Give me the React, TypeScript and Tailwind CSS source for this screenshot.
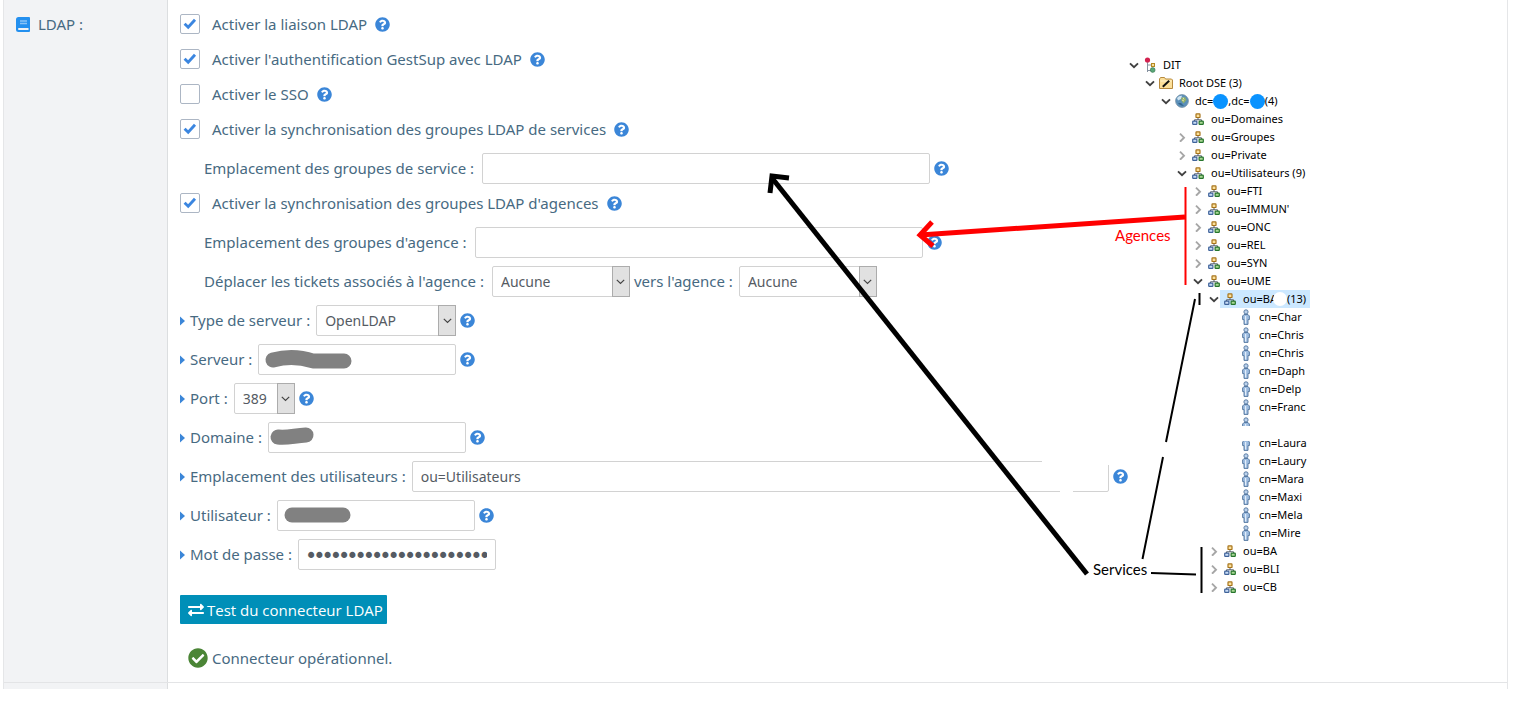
import type { ReactNode } from 'react';
import { FaCheckCircle, FaExchangeAlt, FaQuestionCircle } from 'react-icons/fa';

type TreeKind = 'dit' | 'folder' | 'globe' | 'ou' | 'person' | 'personTop' | 'personBottom';

interface TreeNode {
  level: number;
  kind: TreeKind;
  label: string;
  state?: 'open' | 'closed';
  selected?: boolean;
}

const treeNodes: TreeNode[] = [
  { level: 0, kind: 'dit', label: 'DIT', state: 'open' },
  { level: 1, kind: 'folder', label: 'Root DSE (3)', state: 'open' },
  { level: 2, kind: 'globe', label: '', state: 'open' },
  { level: 3, kind: 'ou', label: 'ou=Domaines' },
  { level: 3, kind: 'ou', label: 'ou=Groupes', state: 'closed' },
  { level: 3, kind: 'ou', label: 'ou=Private', state: 'closed' },
  { level: 3, kind: 'ou', label: 'ou=Utilisateurs (9)', state: 'open' },
  { level: 4, kind: 'ou', label: 'ou=FTI', state: 'closed' },
  { level: 4, kind: 'ou', label: "ou=IMMUN'", state: 'closed' },
  { level: 4, kind: 'ou', label: 'ou=ONC', state: 'closed' },
  { level: 4, kind: 'ou', label: 'ou=REL', state: 'closed' },
  { level: 4, kind: 'ou', label: 'ou=SYN', state: 'closed' },
  { level: 4, kind: 'ou', label: 'ou=UME', state: 'open' },
  { level: 5, kind: 'ou', label: 'ou=BA', state: 'open', selected: true },
  { level: 6, kind: 'person', label: 'cn=Char' },
  { level: 6, kind: 'person', label: 'cn=Chris' },
  { level: 6, kind: 'person', label: 'cn=Chris' },
  { level: 6, kind: 'person', label: 'cn=Daph' },
  { level: 6, kind: 'person', label: 'cn=Delp' },
  { level: 6, kind: 'person', label: 'cn=Franc' },
  { level: 6, kind: 'personTop', label: '' },
  { level: 6, kind: 'personBottom', label: 'cn=Laura' },
  { level: 6, kind: 'person', label: 'cn=Laury' },
  { level: 6, kind: 'person', label: 'cn=Mara' },
  { level: 6, kind: 'person', label: 'cn=Maxi' },
  { level: 6, kind: 'person', label: 'cn=Mela' },
  { level: 6, kind: 'person', label: 'cn=Mire' },
  { level: 5, kind: 'ou', label: 'ou=BA', state: 'closed' },
  { level: 5, kind: 'ou', label: 'ou=BLI', state: 'closed' },
  { level: 5, kind: 'ou', label: 'ou=CB', state: 'closed' },
];

function Help() {
  return (
    <button type="button" aria-label="Aide" className="shrink-0 text-[#3b86d8]">
      <FaQuestionCircle size={15} />
    </button>
  );
}

function CheckRow({ id, label, checked = false }: { id: string; label: string; checked?: boolean }) {
  return (
    <div className="mt-1 flex h-[31px] items-center">
      <span className="relative flex pb-0.5">
        <input
          id={id}
          type="checkbox"
          defaultChecked={checked}
          className="peer size-5 appearance-none rounded-[2px] border border-[#acb6c4] bg-white"
        />
        <svg
          viewBox="0 0 20 20"
          className="pointer-events-none absolute inset-0 hidden size-5 peer-checked:block"
          fill="none"
          stroke="#3b86e0"
          strokeWidth="2.9"
        >
          <path d="M4.6 9.8 L8.2 13.2 L15 5.8" />
        </svg>
      </span>
      <label htmlFor={id} className="ml-3 mr-2 pb-0.5">{label}</label>
      <Help />
    </div>
  );
}

function FieldRow({ id, label, nested = false, children }: { id: string; label: string; nested?: boolean; children: ReactNode }) {
  return (
    <div className={nested ? 'mt-2 flex h-[31px] items-center pl-6' : 'mt-2 flex h-[31px] items-center'}>
      {!nested && (
        <svg viewBox="0 0 5 10" className="mr-[5px] h-[10px] w-[5px]" fill="#3b86d8">
          <path d="M0 0.5 L5 5 L0 9.5 Z" />
        </svg>
      )}
      <label htmlFor={id} className={nested ? 'mr-2 pb-0.5' : 'mr-1.5 pb-0.5'}>{label}</label>
      {children}
    </div>
  );
}

const inputClass = 'h-[31px] rounded-[2px] border border-[#d2d2d2] bg-white px-2 text-[#555b63] outline-none';

function Select({ id, value, width }: { id: string; value: string; width: string }) {
  return (
    <span className={`relative flex h-[31px] ${width}`}>
      <select
        id={id}
        className="w-full appearance-none rounded-[2px] border border-[#d2d2d2] bg-white px-2 text-sm text-[#555b63] outline-none"
      >
        <option>{value}</option>
      </select>
      <span className="pointer-events-none absolute inset-y-0 right-0 flex w-[18px] items-center justify-center border border-[#acacac] bg-[#e1e1e1]">
        <svg viewBox="0 0 9 6" className="h-[6px] w-[9px]" fill="none" stroke="#444" strokeWidth="1.2">
          <path d="M0.8 0.8 L4.5 4.5 L8.2 0.8" />
        </svg>
      </span>
    </span>
  );
}

function Redaction({ path }: { path: string }) {
  return (
    <svg viewBox="0 0 100 31" className="pointer-events-none absolute left-0 top-0 h-[31px] w-[100px]">
      <path d={path} fill="none" stroke="#818181" strokeWidth="15" strokeLinecap="round" strokeLinejoin="round" />
    </svg>
  );
}

function Person({ clip }: { clip?: 'top' | 'bottom' }) {
  const box = clip === 'top' ? '0 0 10 9' : clip === 'bottom' ? '0 6 10 10' : '0 0 10 16';
  const size = clip === 'top' ? 'h-[9px] w-[10px]' : clip === 'bottom' ? 'h-[10px] w-[10px]' : 'h-4 w-[10px]';
  return (
    <svg viewBox={box} className={size}>
      <path
        d="M3 5.5 H7 L8.4 7 V10.6 H7 V15.4 H3 V10.6 H1.6 V7 Z"
        fill="#9dbce0"
        stroke="#4f739c"
        strokeWidth="0.9"
      />
      <path d="M4.6 7 V14.5" stroke="#e5effa" strokeWidth="1.2" />
      <circle cx="5" cy="2.9" r="2.1" fill="#bdd3ed" stroke="#4f739c" strokeWidth="0.9" />
    </svg>
  );
}

function NodeIcon({ kind }: { kind: TreeKind }) {
  switch (kind) {
    case 'dit':
      return (
        <svg viewBox="0 0 12 16" className="h-4 w-3">
          <path d="M3.5 5 V15 M3.5 8 H8 M3.5 13.5 H7" stroke="#8792a0" fill="none" />
          <circle cx="3.5" cy="3" r="2.6" fill="#d3224f" />
          <rect x="7.5" y="6.5" width="3" height="3" fill="#f8df9c" stroke="#b68922" />
          <circle cx="8.7" cy="13" r="2.4" fill="#5aa878" stroke="#34744b" strokeWidth="0.6" />
        </svg>
      );
    case 'folder':
      return (
        <svg viewBox="0 0 14 14" className="size-[14px]">
          <path d="M0.5 3 L1.5 1.5 H5.5 L6.5 3 H12.5 L13.5 4 V12.5 H0.5 Z" fill="#fcdf99" stroke="#b78a3e" />
          <path d="M1.5 5 H12.5" stroke="#fff3cf" />
          <path d="M3.8 10.7 L10.2 4.8" stroke="#111" strokeWidth="2" />
        </svg>
      );
    case 'globe':
      return (
        <svg viewBox="0 0 14 14" className="size-[14px]">
          <circle cx="7" cy="7" r="6.4" fill="#5a8fb9" stroke="#7690a5" strokeWidth="0.8" />
          <path d="M2 4 Q4 1.4 7 1.7 L6 5 L3 6.5 Z" fill="#cfe4f1" />
          <path d="M6 4 L10 3 L11.5 6 L8.5 9.5 L6.5 7 Z" fill="#8eb06b" />
          <path d="M3 9 Q5 12 9 12 L6 9 Z" fill="#33658e" />
          <path d="M8 3.5 L9 5.5 M7 6 L9 7" stroke="#f3e5ab" strokeWidth="0.9" />
        </svg>
      );
    case 'ou':
      return (
        <svg viewBox="0 0 12 12" className="size-3">
          <path d="M6 5 V7 M2.5 8.5 V6.8 H9.5 V8.5" fill="none" stroke="#59606b" />
          <rect x="4" y="0.9" width="4" height="3.6" rx="0.6" fill="#fbe19d" stroke="#a8741a" strokeWidth="1.2" />
          <rect x="0.7" y="8.1" width="4.2" height="3.2" rx="0.6" fill="#c9dcf5" stroke="#3f639a" strokeWidth="1.2" />
          <rect x="7.1" y="8.1" width="4.2" height="3.2" rx="0.6" fill="#a9d794" stroke="#26752c" strokeWidth="1.2" />
        </svg>
      );
    case 'personTop':
      return <span className="flex h-4 items-start"><Person clip="top" /></span>;
    case 'personBottom':
      return <span className="flex h-4 items-end"><Person clip="bottom" /></span>;
    default:
      return <Person />;
  }
}

function Chevron({ state }: { state?: 'open' | 'closed' }) {
  if (!state) return null;
  return (
    <svg viewBox="0 0 10 10" className="size-[10px]" fill="none" strokeWidth="1.9">
      {state === 'open' ? (
        <path d="M1 3.4 L5 7.2 L9 3.4" stroke="#404040" />
      ) : (
        <path d="M3 1.7 L7 5.7 L3 9.7" stroke="#a6a6a6" />
      )}
    </svg>
  );
}

function TreeLabel({ node }: { node: TreeNode }) {
  if (node.kind === 'globe') {
    return (
      <span className="flex items-center whitespace-nowrap">
        dc=<i className="size-[15px] rounded-full bg-[#0a93ff]" />
        ,dc=<i className="size-[15px] rounded-full bg-[#0a93ff]" />(4)
      </span>
    );
  }
  if (node.selected) {
    return (
      <span className="flex items-center">
        {node.label}
        <i className="-ml-1 size-[14px] rounded-full bg-white" />
        (13)
      </span>
    );
  }
  return <span className="whitespace-nowrap">{node.label}</span>;
}

function Tree() {
  return (
    <ul className="pt-14 font-['Noto_Sans','Open_Sans',sans-serif] text-[11px] leading-[18px] text-black">
      {treeNodes.map((node, i) => (
        <li key={i} className="flex h-[18px] items-center" style={{ paddingLeft: node.level * 16 }}>
          <span className="flex w-[11px] shrink-0 justify-center">
            <Chevron state={node.state} />
          </span>
          <span
            className={
              node.selected
                ? 'ml-px flex h-[18px] items-center bg-[#cce8ff] pr-1'
                : 'ml-px flex h-[18px] items-center'
            }
          >
            <span className="flex w-[23px] shrink-0 items-center justify-center pr-[3px]">
              <NodeIcon kind={node.kind} />
            </span>
            <TreeLabel node={node} />
          </span>
        </li>
      ))}
    </ul>
  );
}

function Annotations() {
  return (
    <div className="pointer-events-none absolute left-0 top-0 font-[Lato,sans-serif] text-[15px] leading-5">
      <svg width="1330" height="620" viewBox="0 0 1330 620" fill="none">
        <path d="M1042 461 H1110 V465" stroke="#fff" strokeWidth="4" />
        <path d="M1060 491 H1073" stroke="#fff" strokeWidth="4" />
        <path d="M1087 574 L772 178" stroke="#000" strokeWidth="5" />
        <path d="M770 193 L772 176 L789 178" stroke="#000" strokeWidth="5" />
        <path d="M1185 217 L920 235" stroke="#f00" strokeWidth="5" />
        <path d="M932 222 L920 235 L933 246" stroke="#f00" strokeWidth="5" />
        <path d="M1185.5 187 V285" stroke="#f00" strokeWidth="2" />
        <path d="M1195 299 L1166 442 M1163 457 L1142.5 559" stroke="#000" strokeWidth="2" />
        <path d="M1199.5 293 V305 M1201.5 547 V593 M1151 573 L1196 574.5" stroke="#000" strokeWidth="2" />
      </svg>
      <span className="absolute left-[1115px] top-[225px] text-[#f00]">Agences</span>
      <span className="absolute left-[1093px] top-[559px] text-black">Services</span>
    </div>
  );
}

export default function App() {
  return (
    <main className="relative overflow-hidden bg-white font-['Noto_Sans','Open_Sans',sans-serif] text-[15px] leading-5 text-[#476a82]">
      <div className="ml-[3px] mr-2 border-x border-[#e5e6e8]">
        <section className="flex border-b border-[#e3e4e6]">
          <h2 className="flex w-[164px] shrink-0 items-start gap-2 border-r border-[#dcdee0] bg-[#f2f3f5] pl-3 pt-[14px]">
            <svg viewBox="0 0 14 15" className="mt-[3px] h-[15px] w-[14px]">
              <path d="M2.5 0 H13 Q14 0 14 1 V14 Q14 15 13 15 H2.5 Q0 15 0 12.5 V2.5 Q0 0 2.5 0 Z" fill="#2490ef" />
              <path d="M4 4 H11 M4 6.5 H11" stroke="#8bc4f7" strokeWidth="1.3" />
              <path d="M2.5 11 H12.5 V13 H2.5 Q1.5 12 2.5 11 Z" fill="#f2f3f5" />
            </svg>
            LDAP :
          </h2>

          <form className="min-w-0 max-w-[960px] flex-1 pb-[14px] pl-3 pt-[5px]" onSubmit={(e) => e.preventDefault()}>
            <CheckRow id="ldap" label="Activer la liaison LDAP" checked />
            <CheckRow id="auth" label="Activer l'authentification GestSup avec LDAP" checked />
            <CheckRow id="sso" label="Activer le SSO" />
            <CheckRow id="sync-service" label="Activer la synchronisation des groupes LDAP de services" checked />
            <FieldRow id="service-url" label="Emplacement des groupes de service :" nested>
              <input id="service-url" type="text" className={`mr-1 w-[448px] text-sm ${inputClass}`} />
              <Help />
            </FieldRow>
            <CheckRow id="sync-agency" label="Activer la synchronisation des groupes LDAP d'agences" checked />
            <FieldRow id="agency-url" label="Emplacement des groupes d'agence :" nested>
              <input id="agency-url" type="text" className={`mr-1 w-[448px] text-sm ${inputClass}`} />
              <Help />
            </FieldRow>
            <FieldRow id="from-agency" label="Déplacer les tickets associés à l'agence :" nested>
              <Select id="from-agency" value="Aucune" width="w-[138px]" />
              <label htmlFor="to-agency" className="ml-1 mr-1.5 pb-0.5">vers l'agence :</label>
              <Select id="to-agency" value="Aucune" width="w-[138px]" />
            </FieldRow>
            <FieldRow id="type" label="Type de serveur :">
              <Select id="type" value="OpenLDAP" width="w-[140px] mr-1" />
              <Help />
            </FieldRow>
            <FieldRow id="server" label="Serveur :">
              <span className="relative mr-1 flex">
                <input id="server" type="text" className={`w-[198px] text-sm ${inputClass}`} />
                <Redaction path="M15 16 C29 12 43 13 55 17 H86" />
              </span>
              <Help />
            </FieldRow>
            <FieldRow id="port" label="Port :">
              <Select id="port" value="389" width="w-[61px] mr-1" />
              <Help />
            </FieldRow>
            <FieldRow id="domain" label="Domaine :">
              <span className="relative mr-1 flex">
                <input id="domain" type="text" className={`w-[198px] text-sm ${inputClass}`} />
                <Redaction path="M10 15 C19 16 25 14 38 13" />
              </span>
              <Help />
            </FieldRow>
            <FieldRow id="users-url" label="Emplacement des utilisateurs :">
              <input id="users-url" type="text" defaultValue="ou=Utilisateurs" className={`mr-1 w-[697px] text-sm ${inputClass}`} />
              <Help />
            </FieldRow>
            <FieldRow id="user" label="Utilisateur :">
              <span className="relative mr-1 flex">
                <input id="user" type="text" className={`w-[198px] text-sm ${inputClass}`} />
                <Redaction path="M15 15 H66" />
              </span>
              <Help />
            </FieldRow>
            <FieldRow id="password" label="Mot de passe :">
              <input
                id="password"
                type="password"
                defaultValue="000000000000000000000000000000"
                className={`w-[198px] font-['DejaVu_Sans',sans-serif] text-sm [-webkit-text-stroke:2px_#555b63] ${inputClass}`}
              />
            </FieldRow>
            <button
              type="submit"
              className="mt-[25px] flex h-[29px] items-center gap-[3px] rounded-[1px] bg-[#008fb8] pl-2 pr-1 font-['Open_Sans',sans-serif] text-white"
            >
              <FaExchangeAlt size={16} />
              Test du connecteur LDAP
            </button>
            <p className="mt-6 flex h-5 items-center gap-1 pl-2">
              <FaCheckCircle size={20} className="text-[#4b8536]" />
              Connecteur opérationnel.
            </p>
          </form>

          <aside className="w-[379px] shrink-0">
            <Tree />
          </aside>
        </section>
        <div className="h-[6px] w-[164px] border-r border-[#dcdee0] bg-[#f2f3f5]" />
      </div>
      <Annotations />
    </main>
  );
}
